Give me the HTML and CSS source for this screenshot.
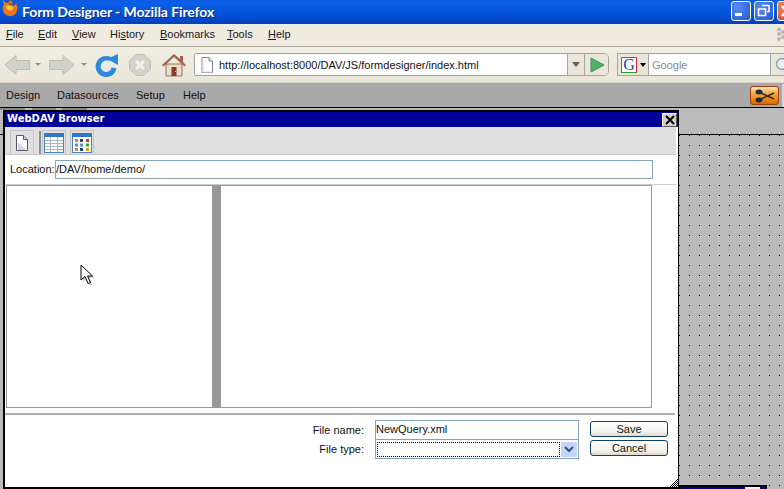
FILE: index.html
```html
<!DOCTYPE html>
<html lang="en">
<head>
<meta charset="utf-8">
<title>Form Designer - Mozilla Firefox</title>
<link rel="stylesheet" href="styles.css">
</head>
<body>
<div class="browser">
  <header class="titlebar">
    <svg class="fx-logo" width="18" height="17" viewBox="0 0 18 17"><circle cx="9" cy="8" r="7.500" fill="#2a4f9c"/><path d="M2 0c0 2 0 3 1 4-2 3-2 7 1 10 3 3 9 3 11-1 2-3 2-7 0-10-.5 2-2 2.500-3 2 0-2-1-4-3-5 0 2-2 2-3 3C5 3 3 2 2 0z" fill="#e8761c"/><path d="M5 6c2-1 6-.5 7 1.500.6 1.500-.5 3-3 3C7 10.500 5 8.500 5 6z" fill="#f9c42d"/><path d="M7 4c2-1 5-.5 6 2-2-1-4-1.500-6-2z" fill="#2a4f9c"/></svg>
    <span class="title-text">Form Designer - Mozilla Firefox</span>
    <div class="winbtns">
      <span class="winbtn"><svg width="20" height="20" viewBox="0 0 20 20"><rect x="4" y="12" width="7" height="3" fill="#fff"/></svg></span>
      <span class="winbtn"><svg width="20" height="20" viewBox="0 0 20 20"><path d="M8 4.500h7v6h-2M4.500 8h7v6.500h-7z" fill="none" stroke="#fff" stroke-width="1.500"/></svg></span>
      <span class="winbtn close"><svg width="20" height="20" viewBox="0 0 20 20"><path d="M5 5l9 10M14 5L5 15" stroke="#fff" stroke-width="2.500"/></svg></span>
    </div>
  </header>
  <nav class="menubar">
    <span class="m1"><u>F</u>ile</span>
    <span class="m2"><u>E</u>dit</span>
    <span class="m3"><u>V</u>iew</span>
    <span class="m4">Hi<u>s</u>tory</span>
    <span class="m5"><u>B</u>ookmarks</span>
    <span class="m6"><u>T</u>ools</span>
    <span class="m7"><u>H</u>elp</span>
    <svg class="throbber" width="8" height="14" viewBox="0 0 8 14"><g fill="#b9b6ab"><circle cx="3" cy="2.500" r="2"/><circle cx="7" cy="5" r="2"/><circle cx="3" cy="7" r="2"/><circle cx="7" cy="10" r="2"/><circle cx="3" cy="12" r="2"/></g></svg>
  </nav>
  <div class="navbar">
    <svg class="ic back" width="28" height="24" viewBox="0 0 28 24"><path d="M1 12L12 2.500v5h13.500v9H12v5z" fill="#d2d2cc" stroke="#bcbcb4"/></svg>
    <span class="drop d1"></span>
    <svg class="ic fwd" width="28" height="24" viewBox="0 0 28 24"><path d="M27 12L16 2.500v5H2.500v9H16v5z" fill="#d2d2cc" stroke="#bcbcb4"/></svg>
    <span class="drop d2"></span>
    <svg class="ic reload" width="24" height="24" viewBox="0 0 24 24"><path d="M15 6.500A8 8 0 1 0 19 15" fill="none" stroke="#2c8ad8" stroke-width="5"/><path d="M15 9.500A4.500 4.500 0 1 0 15.500 15" fill="none" stroke="#d8ecfa" stroke-width="1.500"/><path d="M23 1v11l-11-6z" fill="#2c8ad8"/></svg>
    <svg class="ic stop" width="22" height="22" viewBox="0 0 22 22"><path d="M7 .5h8L21.500 7v8L15 21.500H7L.5 15V7z" fill="#d3d3cd" stroke="#bdbdb6"/><path d="M7 7l8 8M15 7l-8 8" stroke="#f2f2ec" stroke-width="3"/></svg>
    <svg class="ic home" width="24" height="24" viewBox="0 0 24 24"><path d="M4 11h16v12H4z" fill="#e9dcc8" stroke="#94755e"/><path d="M0 12L12 1l6 5V3h3v6l3 3-1.500 1.500L12 4 1.500 13.500z" fill="#a8644a"/><rect x="9.500" y="14" width="5" height="9" fill="#8a3c28"/><rect x="13" y="18" width="1" height="1" fill="#f4d030"/></svg>
    <div class="urlbar">
      <svg class="pageic" width="14" height="16" viewBox="0 0 14 16"><path d="M2 .5h7l3.500 3.500v11.500H2z" fill="#fff" stroke="#7d8794"/><path d="M9 .5V4h3.500" fill="#dfe5ee" stroke="#7d8794"/><path d="M3 5v10h9" fill="none" stroke="#d8dfe8"/></svg>
      <span class="urltext">http://localhost:8000/DAV/JS/formdesigner/index.html</span>
      <span class="urldrop"><span class="tri"></span></span>
      <span class="urlgo"><svg width="16" height="16" viewBox="0 0 16 16"><path d="M2 1l13 7-13 7z" fill="#55b06a" stroke="#3c9150"/></svg></span>
    </div>
    <div class="search">
      <span class="engine"><span class="gicon">G</span><span class="tri dark"></span></span>
      <span class="searchtext">Google</span>
      <span class="searchgo"><svg width="18" height="18" viewBox="0 0 18 18"><circle cx="8" cy="8" r="5.500" fill="#e6eef5" stroke="#9aa4ad" stroke-width="1.500"/><path d="M12 12l5 5" stroke="#9aa4ad" stroke-width="2.500"/></svg></span>
    </div>
  </div>
  <div class="appbar">
    <span class="a1">Design</span>
    <span class="a2">Datasources</span>
    <span class="a3">Setup</span>
    <span class="a4">Help</span>
    <span class="scissors"><svg width="20" height="14" viewBox="0 0 20 14"><ellipse cx="4" cy="3" rx="3.500" ry="2.500" fill="#1b2b50"/><ellipse cx="4" cy="11" rx="3.500" ry="2.500" fill="#1b2b50"/><path d="M6 4l13 6M6 10l13-6" stroke="#2a2a2a" stroke-width="1.500"/></svg></span>
    <span class="appedge"></span>
  </div>
  <main class="workspace">
    <div class="tabs"><span class="tab t1"></span><span class="tab t2"></span><span class="tab t3"></span></div>
    <div class="canvas">
      <svg class="dots" width="784" height="354"><defs><pattern id="dotgrid" width="10" height="10" patternUnits="userSpaceOnUse"><rect x="9" y="0" width="1" height="1" fill="#000"/></pattern></defs><rect width="784" height="354" fill="url(#dotgrid)"/></svg>
    </div>
  </main>
</div>

<section class="dialog">
  <div class="dlg-title">
    <span class="dlg-name">WebDAV Browser</span>
    <span class="dlg-close"><svg width="10" height="10" viewBox="0 0 10 10"><path d="M1 1l8 8M9 1L1 9" stroke="#000" stroke-width="2"/></svg></span>
  </div>
  <div class="dlg-tools">
    <span class="toolbtn"><svg width="14" height="18" viewBox="0 0 14 18"><path d="M1.500 1.500h7l4 4v11h-11z" fill="#fff" stroke="#556"/><path d="M8.500 1.500v4h4" fill="#cfd6e4" stroke="#556"/><path d="M3 16V8l8 8z" fill="#cdd5e6"/></svg></span>
    <span class="toolsep"></span>
    <span class="toolbtn b2"><svg width="20" height="20" viewBox="0 0 20 20"><rect x=".5" y=".5" width="19" height="19" fill="#fff" stroke="#4a7fc0"/><rect x="0" y="0" width="20" height="4" fill="#2f78c8"/><path d="M1 7.500h18M1 10.500h18M1 13.500h18M1 16.500h18" stroke="#a8b4c0"/><path d="M6.500 4v15M13.500 4v15" stroke="#a8b4c0"/></svg></span>
    <span class="toolbtn b3"><svg width="20" height="20" viewBox="0 0 20 20"><rect x=".5" y=".5" width="19" height="19" fill="#fff" stroke="#4a7fc0"/><rect x="0" y="0" width="20" height="4" fill="#2f78c8"/><g><rect x="3" y="6" width="3" height="3" fill="#e87b3c"/><rect x="8" y="6" width="3" height="3" fill="#24407a"/><rect x="14" y="6" width="3" height="3" fill="#c0392b"/><rect x="3" y="10.500" width="3" height="3" fill="#5a8fd0"/><rect x="8" y="10.500" width="3" height="3" fill="#5a8fd0"/><rect x="14" y="10.500" width="3" height="3" fill="#2e9e4c"/><rect x="3" y="15" width="3" height="3" fill="#e87b3c"/><rect x="8" y="15" width="3" height="3" fill="#24407a"/><rect x="14" y="15" width="3" height="3" fill="#d4a017"/></g></svg></span>
  </div>
  <div class="dlg-loc">
    <label class="loc-label">Location:</label>
    <div class="field loc-field">/DAV/home/demo/</div>
  </div>
  <div class="panes">
    <div class="pane-left"></div>
    <div class="splitter"></div>
    <div class="pane-right"></div>
  </div>
  <div class="dlg-divider"></div>
  <div class="dlg-form">
    <div class="form-labels">
      <span>File name:</span>
      <span>File type:</span>
    </div>
    <div class="form-fields">
      <div class="field name-field">NewQuery.xml</div>
      <div class="field type-field">
        <span class="focus"></span>
        <span class="sel-arrow"><svg width="10" height="7" viewBox="0 0 10 7"><path d="M1 1l4 4 4-4" fill="none" stroke="#3b4e75" stroke-width="2"/></svg></span>
      </div>
    </div>
    <div class="form-btns">
      <span class="btn">Save</span>
      <span class="btn">Cancel</span>
    </div>
  </div>
  <span class="grip"></span>
</section>

<div class="window-peek"><span></span></div>

<svg class="cursor" width="18" height="24" viewBox="0 0 18 24"><path d="M3 3v15l4-3.500 3 7 2.500-1-3-6.500h5z" fill="#888" opacity=".4"/><path d="M1 1v15l4-3.500 3 7 2.500-1-3-6.500h5z" fill="#fff" stroke="#000"/></svg>
```

FILE: styles.css
```css
* { box-sizing: border-box; }
html, body { margin: 0; padding: 0; width: 784px; height: 489px; overflow: hidden; background: #b9b9b9; }
body { font-family: "Liberation Sans", "Noto Sans", sans-serif; font-size: 11px; color: #111; position: relative; }
.browser { width: 784px; height: 489px; display: flex; flex-direction: column; overflow: hidden; }

.titlebar { height: 24px; flex: none; display: flex; align-items: center; background: linear-gradient(#0a5be0 0, #0a5fe6 3px, #0453d8 14px, #0246c4 21px, #0241b4 24px); color: #fff; position: relative; }
.fx-logo { margin: -7px 0 0 1px; flex: none; }
.title-text { margin-left: 3px; margin-top: -1px; font-family: "Lato", sans-serif; font-weight: 700; font-size: 14px; letter-spacing: -.1px; text-shadow: 1px 1px 0 #0a2f90; white-space: nowrap; }
.winbtns { margin-left: auto; display: flex; gap: 3px; margin-right: -13px; align-items: center; margin-top: -3px; }
.winbtn { width: 20px; height: 20px; border: 1px solid #fff; border-radius: 3px; background: radial-gradient(circle at 30% 30%, #5a8cf0, #2456cf); display: block; }
.winbtn svg { display: block; margin: -1px; }
.winbtn.close { background: radial-gradient(circle at 30% 30%, #e98a66, #d0431e); }

.menubar { height: 23px; flex: none; background: #efebe0; border-bottom: 1px solid #aca899; display: flex; align-items: center; font-size: 11px; color: #1a1a1a; padding-bottom: 2px; }
.menubar span { white-space: nowrap; }
.m1 { margin-left: 6px; width: 32px; }
.m2 { width: 34px; }
.m3 { width: 38px; }
.m4 { width: 50px; }
.m5 { width: 67px; }
.m6 { width: 41px; }
.throbber { margin-left: auto; }

.navbar { height: 36px; flex: none; background: linear-gradient(#f1eee4, #eae6d9); border-bottom: 1px solid #d8d4c6; display: flex; align-items: center; }
.ic { flex: none; display: block; }
.back { margin-left: 4px; }
.drop { width: 0; height: 0; border: 3px solid transparent; border-top: 3px solid #8f8f8a; border-bottom: 0; flex: none; }
.d1 { margin-left: 3px; }
.fwd { margin-left: 6px; }
.d2 { margin-left: 6px; }
.reload { margin-left: 8px; }
.stop { margin-left: 10px; }
.home { margin-left: 11px; }
.urlbar { margin-left: 8px; width: 415px; height: 23px; border: 1px solid #a5a59b; border-radius: 2px 5px 5px 2px; background: #fff; display: flex; align-items: center; overflow: hidden; flex: none; }
.pageic { margin-left: 5px; flex: none; }
.urltext { margin-left: 5px; font-size: 11px; color: #111; white-space: nowrap; flex: 1; }
.urldrop, .urlgo { height: 100%; display: flex; align-items: center; justify-content: center; background: #e9e6da; border-left: 1px solid #a5a59b; flex: none; }
.urldrop { width: 17px; }
.urlgo { width: 24px; }
.tri { width: 0; height: 0; border: 4px solid transparent; border-top: 5px solid #5f5f5a; border-bottom: 0; display: block; }
.tri.dark { border-width: 3px; border-top: 4px solid #000; border-bottom: 0; margin-left: 3px; }
.search { margin-left: 8px; width: 180px; height: 23px; border: 1px solid #a5a59b; background: #fff; display: flex; align-items: center; flex: none; overflow: hidden; }
.engine { width: 31px; height: 100%; display: flex; align-items: center; background: #e9e6da; border-right: 1px solid #a5a59b; padding-left: 3px; flex: none; }
.gicon { width: 16px; height: 16px; background: #fff; border: 1px solid; border-color: #3a6fd8 #d23 #2a9a3a #3a6fd8; color: #1a3fc4; font: 400 16px/14px "Liberation Serif", serif; text-align: center; display: block; }
.searchtext { margin-left: 3px; width: 118px; color: #8a8a8a; font-size: 11px; flex: none; }
.searchgo { height: 100%; width: 26px; background: #e9e6da; border-left: 1px solid #a5a59b; display: flex; align-items: center; padding-left: 3px; flex: none; }

.appbar { height: 25px; flex: none; background: #a9a9a9; border-bottom: 1px solid #000; display: flex; align-items: center; font-size: 11px; color: #111; position: relative; }
.a1 { margin-left: 6px; width: 51px; }
.a2 { width: 79px; }
.a3 { width: 47px; }
.scissors { position: absolute; left: 750px; top: 3px; width: 29px; height: 19px; border: 1px solid #a23b10; border-radius: 3px; background: linear-gradient(#fbe7c8 0, #f8b04a 30%, #ee8a0c 70%, #d56c04 100%); display: flex; align-items: center; justify-content: center; }
.appedge { position: absolute; right: 0; top: 1px; width: 2px; height: 23px; background: #d8d8d8; }

.workspace { flex: 1; background: #bbb; display: flex; flex-direction: column; }
.tabs { height: 27px; flex: none; border-bottom: 1px solid #000; display: flex; align-items: flex-start; }
.tab { height: 2px; background: #888; display: block; }
.t1 { width: 25px; }
.t2 { width: 24px; margin-left: 7px; }
.t3 { width: 25px; margin-left: 6px; }
.canvas { flex: 1; background-color: #bbb; overflow: hidden; }
.dots { display: block; shape-rendering: crispEdges; }

.dialog { position: absolute; left: 3px; top: 110px; width: 676px; height: 379px; background: #fff; border: 2px solid #000; border-width: 2px 1px 2px 2px; display: flex; flex-direction: column; }
.dlg-title { height: 15px; flex: none; background: #000099; color: #fff; display: flex; align-items: center; justify-content: space-between; padding-left: 2px; }
.dlg-name { font-family: "DejaVu Sans", sans-serif; font-weight: 700; font-size: 10px; margin-top: -2px; }
.dlg-close { width: 15px; height: 14px; background: #d4d0c8; border: 1px solid; border-color: #fff #555 #555 #fff; display: flex; align-items: center; justify-content: center; margin-right: 1px; }
.dlg-tools { height: 28px; flex: none; background: #e0e0e0; border-bottom: 1px solid #c8c8c8; margin-right: 2px; display: flex; align-items: flex-end; padding-left: 5px; }
.toolbtn { width: 24px; height: 24px; border: 1px solid #c4c4c4; border-bottom: 0; display: flex; align-items: center; justify-content: center; }
.toolsep { width: 2px; height: 23px; background: #8f8f8f; margin-left: 5px; }
.toolbtn.b2 { margin-left: 1px; }
.toolbtn.b3 { margin-left: 4px; }
.dlg-loc { height: 30px; flex: none; display: flex; align-items: flex-start; border-bottom: 1px solid #ccc; margin-right: 2px; padding: 5px 0 0 5px; }
.loc-label { width: 45px; flex: none; white-space: nowrap; line-height: 19px; }
.field { border: 1px solid #84a4bd; background: #fff; padding-left: 0; white-space: nowrap; }
.loc-field { width: 598px; height: 19px; line-height: 17px; }
.panes { height: 223px; flex: none; margin: 0 0 0 1px; width: 646px; border: 1px solid #999; display: flex; }
.pane-left { width: 205px; flex: none; }
.splitter { width: 9px; flex: none; background: #999; }
.pane-right { flex: 1; }
.dlg-divider { height: 2px; flex: none; background: #b0b0b0; margin: 5px 3px 0 0; }
.dlg-form { flex: 1; display: flex; padding-top: 5px; }
.form-labels { width: 359px; flex: none; display: flex; flex-direction: column; text-align: right; line-height: 16px; padding-top: 2px; gap: 3px; }
.form-fields { margin-left: 11px; width: 204px; display: flex; flex-direction: column; flex: none; }
.name-field { height: 20px; line-height: 16px; }
.type-field { height: 19px; border-top: 0; display: flex; align-items: center; padding: 1px; gap: 1px; }
.focus { flex: 1; height: 15px; border: 1px dotted #000; display: block; }
.sel-arrow { width: 16px; height: 15px; background: #c3d5fb; display: flex; align-items: center; justify-content: center; border-radius: 1px; }
.form-btns { margin-left: 11px; width: 78px; display: flex; flex-direction: column; gap: 3px; padding-top: 1px; flex: none; }
.btn { height: 16px; border: 1px solid #0f3f70; border-radius: 3px; background: linear-gradient(#fff, #f4f3ec 70%, #dcd8cc); text-align: center; line-height: 15px; display: block; color: #111; }
.grip { position: absolute; right: 0; bottom: 0; width: 9px; height: 9px; background-image: conic-gradient(#000 25%, #fff 0 50%, #000 0 75%, #fff 0); background-size: 2px 2px; clip-path: polygon(100% 0, 100% 100%, 0 100%); }

.window-peek { position: absolute; left: 679px; top: 485px; width: 88px; height: 4px; background: #000099; border: 2px solid #000; border-bottom: 0; }
.window-peek span { position: absolute; right: 5px; top: 0; width: 15px; height: 2px; background: #eee; display: block; }

.cursor { position: absolute; left: 80px; top: 264px; }
```
